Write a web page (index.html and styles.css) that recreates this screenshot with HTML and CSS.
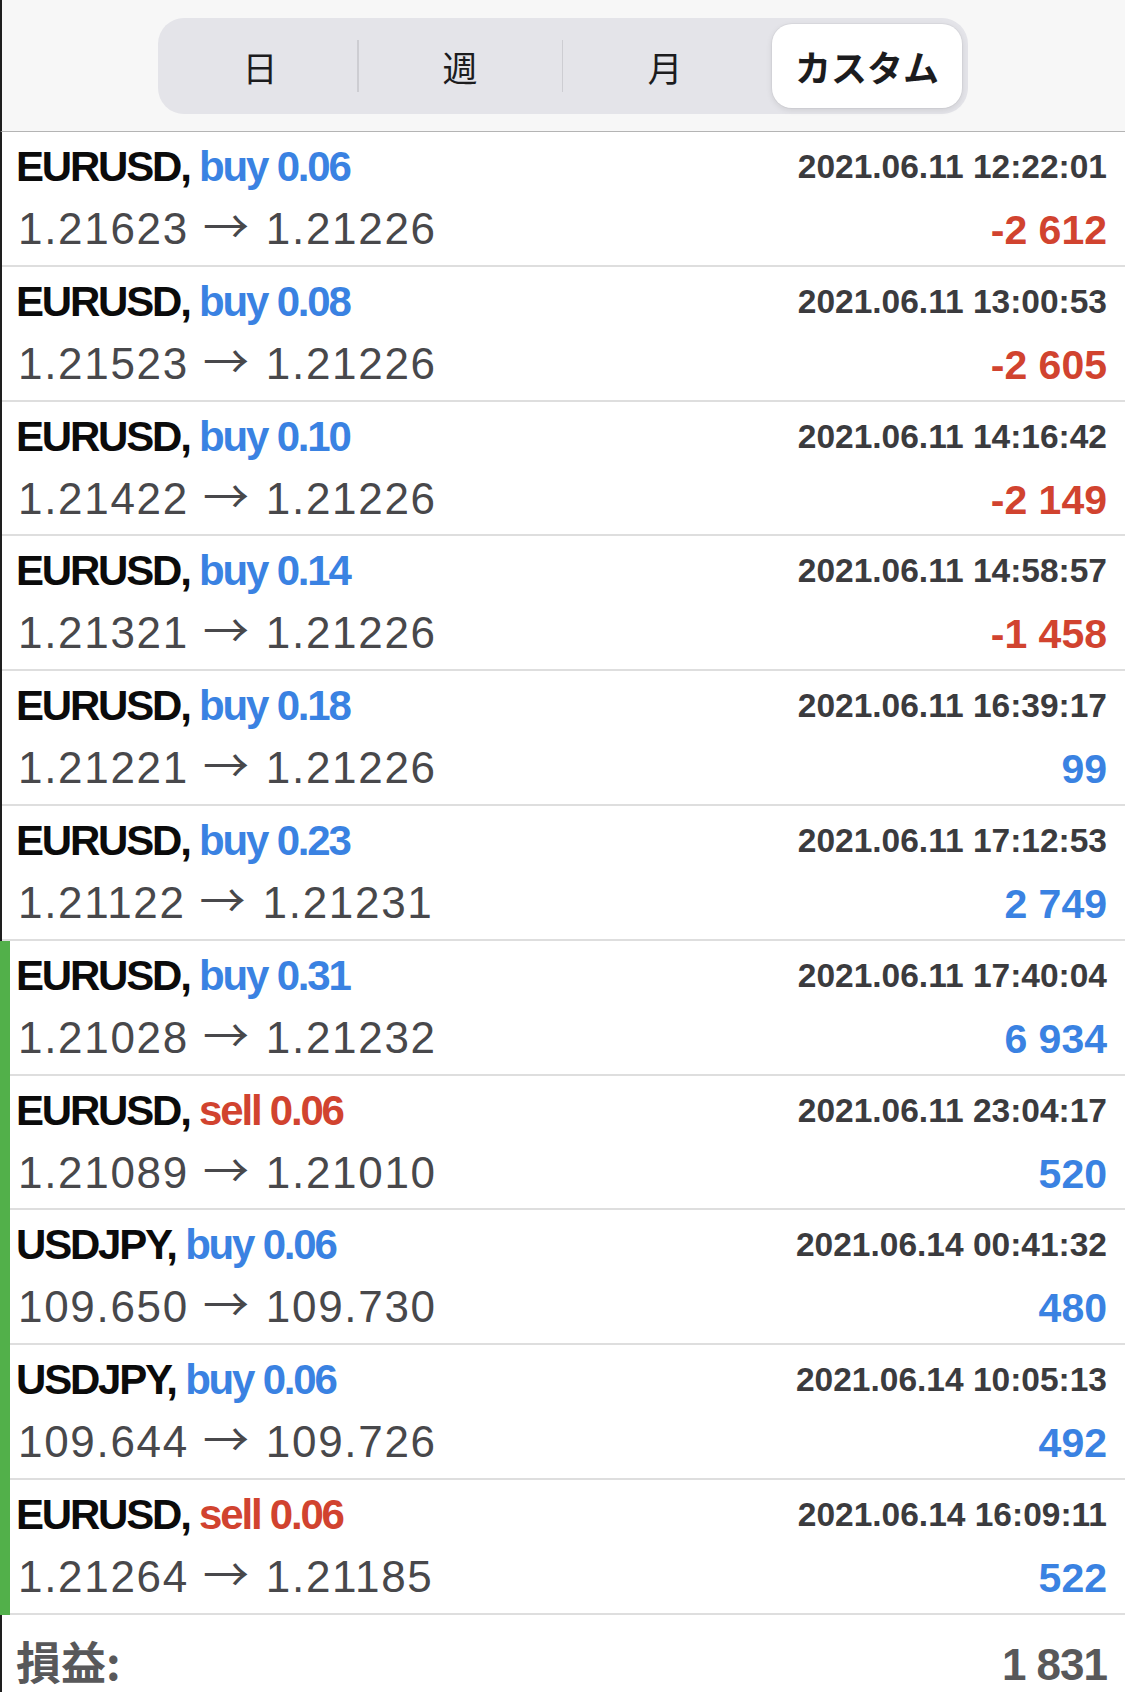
FILE: index.html
```html
<!DOCTYPE html>
<html lang="ja">
<head>
<meta charset="utf-8">
<title>History</title>
<link rel="stylesheet" href="styles.css">
</head>
<body>
<div class="screen">
  <header class="header">
    <div class="segmented">
      <div class="seg s1">日</div>
      <div class="divider"></div>
      <div class="seg s2">週</div>
      <div class="divider"></div>
      <div class="seg s3">月</div>
      <div class="divider hidden"></div>
      <div class="seg s4 active">カスタム</div>
    </div>
  </header>

  <main class="list">
    <div class="row"><div class="cell">
      <div class="line1"><span class="title">EURUSD, <span class="buy">buy 0.06</span></span><span class="date">2021.06.11 12:22:01</span></div>
      <div class="line2"><span class="prices">1.21623 <span class="arrow">→</span> 1.21226</span><span class="profit loss">-2 612</span></div>
    </div></div>
    <div class="row"><div class="cell">
      <div class="line1"><span class="title">EURUSD, <span class="buy">buy 0.08</span></span><span class="date">2021.06.11 13:00:53</span></div>
      <div class="line2"><span class="prices">1.21523 <span class="arrow">→</span> 1.21226</span><span class="profit loss">-2 605</span></div>
    </div></div>
    <div class="row"><div class="cell">
      <div class="line1"><span class="title">EURUSD, <span class="buy">buy 0.10</span></span><span class="date">2021.06.11 14:16:42</span></div>
      <div class="line2"><span class="prices">1.21422 <span class="arrow">→</span> 1.21226</span><span class="profit loss">-2 149</span></div>
    </div></div>
    <div class="row"><div class="cell">
      <div class="line1"><span class="title">EURUSD, <span class="buy">buy 0.14</span></span><span class="date">2021.06.11 14:58:57</span></div>
      <div class="line2"><span class="prices">1.21321 <span class="arrow">→</span> 1.21226</span><span class="profit loss">-1 458</span></div>
    </div></div>
    <div class="row"><div class="cell">
      <div class="line1"><span class="title">EURUSD, <span class="buy">buy 0.18</span></span><span class="date">2021.06.11 16:39:17</span></div>
      <div class="line2"><span class="prices">1.21221 <span class="arrow">→</span> 1.21226</span><span class="profit gain">99</span></div>
    </div></div>
    <div class="row"><div class="cell">
      <div class="line1"><span class="title">EURUSD, <span class="buy">buy 0.23</span></span><span class="date">2021.06.11 17:12:53</span></div>
      <div class="line2"><span class="prices">1.21122 <span class="arrow">→</span> 1.21231</span><span class="profit gain">2 749</span></div>
    </div></div>
    <div class="row marked"><div class="cell">
      <div class="line1"><span class="title">EURUSD, <span class="buy">buy 0.31</span></span><span class="date">2021.06.11 17:40:04</span></div>
      <div class="line2"><span class="prices">1.21028 <span class="arrow">→</span> 1.21232</span><span class="profit gain">6 934</span></div>
    </div></div>
    <div class="row marked"><div class="cell">
      <div class="line1"><span class="title">EURUSD, <span class="sell">sell 0.06</span></span><span class="date">2021.06.11 23:04:17</span></div>
      <div class="line2"><span class="prices">1.21089 <span class="arrow">→</span> 1.21010</span><span class="profit gain">520</span></div>
    </div></div>
    <div class="row marked"><div class="cell">
      <div class="line1"><span class="title">USDJPY, <span class="buy">buy 0.06</span></span><span class="date">2021.06.14 00:41:32</span></div>
      <div class="line2"><span class="prices">109.650 <span class="arrow">→</span> 109.730</span><span class="profit gain">480</span></div>
    </div></div>
    <div class="row marked"><div class="cell">
      <div class="line1"><span class="title">USDJPY, <span class="buy">buy 0.06</span></span><span class="date">2021.06.14 10:05:13</span></div>
      <div class="line2"><span class="prices">109.644 <span class="arrow">→</span> 109.726</span><span class="profit gain">492</span></div>
    </div></div>
    <div class="row marked"><div class="cell">
      <div class="line1"><span class="title">EURUSD, <span class="sell">sell 0.06</span></span><span class="date">2021.06.14 16:09:11</span></div>
      <div class="line2"><span class="prices">1.21264 <span class="arrow">→</span> 1.21185</span><span class="profit gain">522</span></div>
    </div></div>
  </main>

  <footer class="footer">
    <span class="total-label">損益:</span>
    <span class="total-value">1 831</span>
  </footer>
</div>
</body>
</html>
```

FILE: styles.css
```css
html, body {
  margin: 0;
  padding: 0;
  background: #ffffff;
}

body {
  font-family: "Liberation Sans", Arial, "Noto Sans CJK JP", sans-serif;
  color: #111;
}

.screen {
  width: 1125px;
  height: 1692px;
  overflow: hidden;
  display: flex;
  flex-direction: column;
}

/* header with segmented control */
.header {
  flex: 0 0 132px;
  height: 132px;
  box-sizing: border-box;
  background: #f7f7f7;
  border-left: 2px solid #1e1e1e;
  border-bottom: 1px solid #b4b4b4;
  display: flex;
  justify-content: center;
  align-items: flex-start;
  padding-top: 18px;
  padding-right: 2px;
}

.segmented {
  width: 810px;
  height: 96px;
  box-sizing: border-box;
  background: #e4e4e9;
  border-radius: 26px;
  padding: 6px;
  display: flex;
  align-items: center;
}

.seg {
  height: 100%;
  display: flex;
  align-items: center;
  justify-content: center;
  font-family: "Noto Sans CJK JP", sans-serif;
  font-size: 35px;
  color: #1c1c1e;
}

.s1 { width: 194px; }
.s2 { width: 204px; }
.s3 { width: 204px; }
.s4 { width: 190px; margin-left: 4px; }

.seg.active {
  background: #ffffff;
  border-radius: 20px;
  font-weight: 700;
  font-size: 36px;
  box-shadow: 0 2px 6px rgba(0, 0, 0, 0.10), 0 0 0 1px rgba(0, 0, 0, 0.03);
}

.divider {
  width: 2px;
  height: 52px;
  background: #cdcdd2;
}

.divider.hidden {
  background: transparent;
}

/* trade list */
.list {
  flex: 0 0 auto;
  display: flex;
  flex-direction: column;
}

.row {
  flex: 0 0 134.8px;
  height: 134.8px;
  box-sizing: border-box;
  display: flex;
  border-left: 2px solid #1e1e1e;
}

.row.marked {
  border-left: 10px solid #52b04a;
}

.cell {
  flex: 1;
  box-sizing: border-box;
  border-bottom: 2px solid #dedede;
  padding: 7px 18px 0 16px;
}

.row.marked .cell {
  padding-left: 8px;
}

.line1 {
  display: flex;
  justify-content: space-between;
  align-items: baseline;
  height: 59px;
}

.title {
  font-size: 42px;
  line-height: 56px;
  font-weight: 700;
  letter-spacing: -2.2px;
  margin-left: -2px;
  color: #0b0b0b;
}

.buy {
  color: #3a82e2;
}

.sell {
  color: #d1432f;
}

.date {
  font-size: 33.5px;
  line-height: 40px;
  font-weight: 700;
  color: #3b3b3e;
  letter-spacing: 0;
  position: relative;
  top: -3px;
}

.line2 {
  display: flex;
  justify-content: space-between;
  align-items: baseline;
  height: 62px;
}

.prices {
  font-size: 44px;
  line-height: 62px;
  letter-spacing: 1.7px;
  color: #48484b;
}

.arrow {
  font-family: "Noto Sans CJK JP", sans-serif;
  font-size: 46px;
  letter-spacing: 0;
  line-height: 40px;
  margin-right: 3px;
  position: relative;
  top: -1px;
}

.profit {
  font-size: 41px;
  line-height: 40px;
  font-weight: 700;
  letter-spacing: 0;
}

.profit.loss {
  color: #d1432f;
}

.profit.gain {
  color: #3a82e2;
}

/* total */
.footer {
  flex: 1 1 auto;
  min-height: 0;
  border-left: 2px solid #1e1e1e;
  display: flex;
  justify-content: space-between;
  align-items: baseline;
  padding: 21px 18px 0 14px;
  background: #ffffff;
}

.total-label {
  font-family: "Noto Sans CJK JP", sans-serif;
  font-size: 45px;
  font-weight: 700;
  color: #58585a;
  line-height: 50px;
}

.total-value {
  font-size: 44px;
  font-weight: 700;
  color: #58585a;
  line-height: 50px;
  letter-spacing: -1px;
}
```
